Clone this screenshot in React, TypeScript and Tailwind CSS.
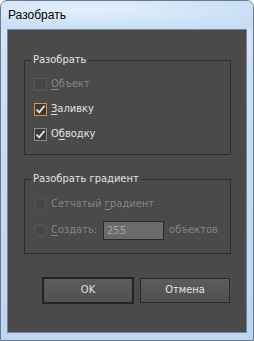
import React from 'react';

const font = { fontFamily: '"DejaVu Sans Condensed", "DejaVu Sans", sans-serif' };

const Check: React.FC<{ checked?: boolean; disabled?: boolean; focus?: boolean }> = ({ checked, disabled, focus }) => (
  <span
    className={`w-[13px] h-[13px] flex items-center justify-center shrink-0 border ${
      focus ? 'border-[#e8922f]' : disabled ? 'border-[#5a5a5a]' : 'border-[#8c8c8c]'
    } ${disabled ? 'bg-[#474747]' : 'bg-[#3a3a3a]'}`}
  >
    {checked && (
      <svg width="11" height="11" viewBox="0 0 11 11">
        <path d="M1.5 5.5 L4.2 8.3 L9.5 1.8" fill="none" stroke="#e6e6e6" strokeWidth="1.8" />
      </svg>
    )}
  </span>
);

const Radio: React.FC = () => (
  <span className="w-[13px] h-[13px] rounded-full shrink-0 border border-[#5c5c5c] bg-[#474747]" />
);

const App: React.FC = () => {
  return (
    <div className="w-[254px] h-[341px] overflow-hidden" style={font}>
      <div className="w-full h-full flex flex-col rounded-t-[7px] border border-[#6b7a8c] bg-gradient-to-b from-[#d3e5f8] via-[#c6dcf4] to-[#bcd5f0]">
        {/* Title bar */}
        <div className="h-[28px] shrink-0 flex items-center pl-[7px] text-[12px] text-black bg-[radial-gradient(ellipse_at_35%_30%,#e4f0fc_0%,#cfe3f7_55%,#c4dbf4_100%)] rounded-t-[6px]" style={{ fontFamily: '"Liberation Sans", Arial, sans-serif' }}>
          Разобрать
        </div>
        {/* Client area */}
        <div className="flex-1 mx-[6px] mb-[7px] border border-[#7a8896] bg-[#4a4a4a] flex flex-col pl-[16px] pr-[15px] pt-[23px] text-[11px] text-[#e2e2e2]">
          <fieldset className="border border-[#2c2c2c] h-[102px] pl-[9px] pb-0 pt-0 min-w-0">
            <legend className="px-[2px] -ml-[3px] h-[14px] leading-[14px]">Разобрать</legend>
            <div className="flex flex-col gap-[10px] pt-[10px] pl-0">
              <label className="flex items-center gap-[4px] h-[15px] text-[#858585]">
                <Check disabled />
                <span><u className="underline-offset-2">О</u>бъект</span>
              </label>
              <label className="flex items-center gap-[4px] h-[15px]">
                <Check checked focus />
                <span><u className="underline-offset-2">З</u>аливку</span>
              </label>
              <label className="flex items-center gap-[4px] h-[15px]">
                <Check checked />
                <span>О<u className="underline-offset-2">б</u>водку</span>
              </label>
            </div>
          </fieldset>

          <fieldset className="border border-[#2c2c2c] h-[82px] mt-[17px] pl-[9px] pt-0 pb-0 min-w-0">
            <legend className="px-[2px] -ml-[3px] h-[14px] leading-[14px]">Разобрать градиент</legend>
            <div className="flex flex-col gap-[9px] pt-[11px] text-[#858585]">
              <label className="flex items-center gap-[4px] h-[15px]">
                <Radio />
                <span>Сетчатый <u className="underline-offset-2">г</u>радиент</span>
              </label>
              <label className="flex items-center gap-[4px] h-[19px]">
                <Radio />
                <span><u className="underline-offset-2">С</u>оздать:</span>
                <span className="ml-[2px] w-[61px] h-[19px] border border-[#2a2a2a] bg-[#6b6b6b] text-[#a3a3a3] pl-[3px] leading-[17px]">255</span>
                <span className="ml-[1px]">объектов</span>
              </label>
            </div>
          </fieldset>

          <div className="flex gap-[6px] mt-[23px] pl-[18px]">
            <button className="w-[92px] h-[27px] border-2 border-[#232323] bg-gradient-to-b from-[#5c5c5c] to-[#505050] text-[#e2e2e2] text-[11px]">
              OK
            </button>
            <button className="w-[90px] h-[25px] mt-[1px] border border-[#2a2a2a] bg-gradient-to-b from-[#5c5c5c] to-[#505050] text-[#e2e2e2] text-[11px]">
              Отмена
            </button>
          </div>
        </div>
      </div>
    </div>
  );
};

export default App;
